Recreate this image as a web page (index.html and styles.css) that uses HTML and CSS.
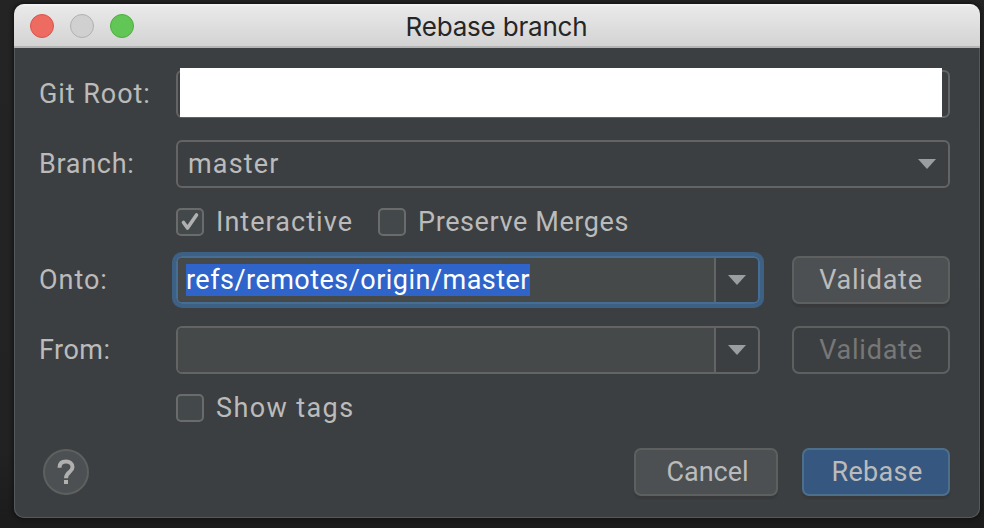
FILE: index.html
```html
<!DOCTYPE html>
<html lang="en">
<head>
<meta charset="utf-8">
<title>Rebase branch</title>
<link rel="stylesheet" href="styles.css">
</head>
<body>
<main class="window">
  <header class="titlebar">
    <div class="lights"><i class="light red"></i><i class="light gray"></i><i class="light green"></i></div>
    <h1 class="title">Rebase branch</h1>
  </header>
  <form class="form">
    <div class="row">
      <span class="label"><span class="t-root">Git Root:</span></span>
      <div class="field"><div class="redaction"></div></div>
    </div>
    <div class="row branch">
      <span class="label"><span class="t-branch">Branch:</span></span>
      <div class="field select"><span class="t-master">master</span>
        <svg class="arrow" width="18" height="10" viewBox="0 0 18 10"><path d="M0 0H18L9 10Z"/></svg></div>
    </div>
    <div class="row checks">
      <span class="label"></span>
      <span class="box"><svg width="28" height="28" viewBox="0 0 28 28"><path d="M7.5 14.5L11.5 20L20.5 7" /></svg></span>
      <span class="check-label first"><span class="t-inter">Interactive</span></span>
      <span class="box"></span>
      <span class="check-label"><span class="t-preserve">Preserve Merges</span></span>
    </div>
    <div class="row onto">
      <span class="label"><span class="t-onto">Onto:</span></span>
      <div class="combo focused">
        <div class="entry"><span class="selected"><span class="t-refs">refs/remotes/origin/master</span></span></div>
        <div class="drop"><svg class="arrow" width="18" height="10" viewBox="0 0 18 10"><path d="M0 0H18L9 10Z"/></svg></div>
      </div>
      <div class="button validate"><span class="t-validate">Validate</span></div>
    </div>
    <div class="row from">
      <span class="label"><span class="t-from">From:</span></span>
      <div class="combo">
        <div class="entry"></div>
        <div class="drop"><svg class="arrow" width="18" height="10" viewBox="0 0 18 10"><path d="M0 0H18L9 10Z"/></svg></div>
      </div>
      <div class="button validate disabled"><span class="t-validate">Validate</span></div>
    </div>
    <div class="row checks">
      <span class="label"></span>
      <span class="box"></span>
      <span class="check-label"><span class="t-tags">Show tags</span></span>
    </div>
    <footer class="row footer">
      <div class="help"><svg width="46" height="46" viewBox="0 0 46 46"><path d="M16.5 18.8C16.5 14.5 19.3 12.6 23 12.6C26.7 12.6 29.5 14.7 29.5 18.2C29.5 23 23 23.2 23 29.2"/><path class="dot" d="M21 31H25V35H21Z"/></svg></div>
      <div class="button cancel"><span class="t-cancel">Cancel</span></div>
      <div class="button primary"><span class="t-rebase">Rebase</span></div>
    </footer>
  </form>
</main>
</body>
</html>
```
FILE: styles.css
```css
* { box-sizing: border-box; }
body {
  margin: 0;
  width: 984px;
  height: 528px;
  padding: 4px 4px 10px 14px;
  overflow: hidden;
  background: linear-gradient(#242424, #222 85%, #1c1c1c 98%);
  font: 27px/32px Roboto, "Liberation Sans", sans-serif;
  color: #bbb;
  white-space: nowrap;
}
.window {
  height: 514px;
  border-radius: 10px;
  background: #3c3f41;
  overflow: hidden;
  box-shadow: inset 0 0 0 1px #55595b, 0 0 4px 1px #111;
}
.titlebar {
  display: grid;
  grid-template-columns: 160px 1fr 176px;
  align-items: center;
  height: 44px;
  padding: 0 1px 0 16px;
  background: linear-gradient(#f6f6f6, #e9e9e9 3px, #d3d3d3 42px, #b2b5b4 42px);
}
.lights { display: flex; gap: 16px; }
.light { width: 24px; height: 24px; border-radius: 50%; border: 1px solid; }
.red { background: #ed6b60; border-color: #d9544b; }
.gray { background: #d0d0d0; border-color: #b0b0b0; }
.green { background: #61c655; border-color: #4dad3f; }
.title {
  margin: 0;
  text-align: center;
  font: 26px/32px Inter, sans-serif;
  letter-spacing: -0.2px;
  color: #262626;
  padding-top: 2px;
}
.form { padding: 22px 30px 0 25px; }
.row { display: flex; align-items: center; height: 48px; }
.label { width: 137px; flex: none; }
.field {
  position: relative;
  flex: 1;
  height: 48px;
  border: 2px solid #646464;
  border-radius: 6px;
}
.redaction { position: absolute; left: 2px; top: -4px; width: 762px; height: 49px; background: #fff; }
.select { display: flex; align-items: center; justify-content: space-between; padding: 0 12px 0 10px; }
.arrow { display: block; fill: #9b9ea0; }
.branch { margin-top: 22px; }
.checks { height: 28px; margin-top: 20px; }
.box {
  width: 28px;
  height: 28px;
  border: 2px solid #6b6b6b;
  border-radius: 5px;
  background: #43494a;
}
.box svg { display: block; margin: -2px; fill: none; stroke: #b0b0b0; stroke-width: 3.6; stroke-linecap: round; stroke-linejoin: round; }
.check-label { margin-left: 12px; }
.first { width: 162px; }
.onto { margin-top: 20px; }
.from { margin-top: 22px; }
.combo { display: flex; width: 584px; height: 48px; border: 2px solid #646464; border-radius: 6px; }
.entry { width: 538px; border-right: 2px solid #646464; background: #45494a; border-radius: 4px 0 0 4px; padding: 6px 8px; }
.focused { border-color: #466d94; box-shadow: 0 0 0 4px #3d6185; }
.selected { display: block; width: 344px; height: 32px; background: #2f65ca; color: #fff; }
.drop { flex: 1; display: grid; place-items: center; }
.button {
  display: grid;
  place-items: center;
  height: 48px;
  border: 2px solid #5e6060;
  border-radius: 7px;
  background: #4c5052;
  box-shadow: 0 3px 1px #37393b;
}
.validate { width: 158px; margin-left: 32px; }
.disabled { background: none; box-shadow: none; color: #777; }
.footer { margin-top: 26px; }
.help { width: 46px; height: 46px; margin-left: 4px; margin-right: auto; border: 2px solid #5e6060; border-radius: 50%; background: #4c5052; }
.help svg { display: block; margin: -2px; fill: none; stroke: #b0b0b0; stroke-width: 4; }
.help .dot { fill: #b0b0b0; stroke: none; }
.cancel { width: 144px; margin-right: 24px; }
.primary { width: 148px; background: #365880; border-color: #4c708c; }

/* Tracking per string */
.t-root { letter-spacing: 0.95px; }
.t-branch { letter-spacing: 0.7px; }
.t-master { letter-spacing: 1.15px; }
.t-inter { letter-spacing: 1.05px; }
.t-preserve { letter-spacing: 0.6px; }
.t-onto { letter-spacing: 0.95px; }
.t-refs { letter-spacing: 0.47px; }
.t-from { letter-spacing: 0.5px; }
.t-validate { letter-spacing: 0.75px; }
.t-tags { letter-spacing: 1.4px; }
.t-cancel { padding-left: 3px; }
.t-rebase { letter-spacing: 0.35px; padding-left: 2px; }
```
